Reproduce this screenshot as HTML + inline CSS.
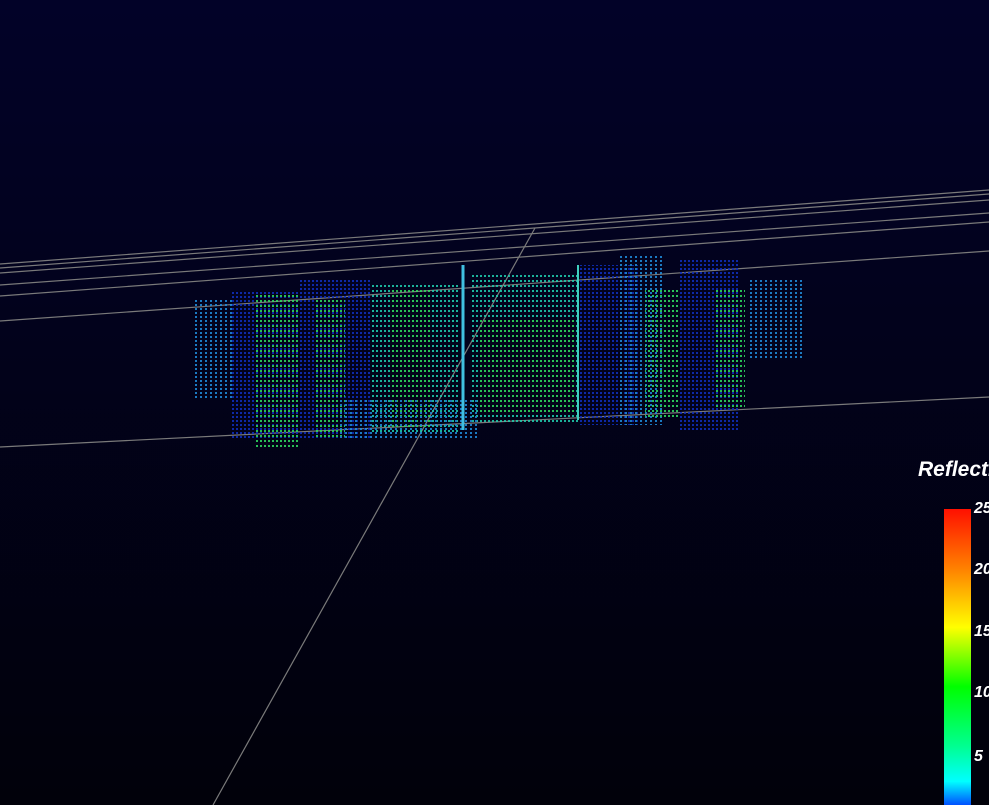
<!DOCTYPE html>
<html><head><style>
html,body{margin:0;padding:0;width:989px;height:805px;overflow:hidden;background:#01011a}
</style></head><body>
<svg width="989" height="805" viewBox="0 0 989 805" xmlns="http://www.w3.org/2000/svg" style="position:absolute;left:0;top:0">
<defs>
<linearGradient id="bg" x1="0" y1="0" x2="0" y2="1">
<stop offset="0" stop-color="#020228"/><stop offset="1" stop-color="#01010a"/>
</linearGradient>
<linearGradient id="cb" x1="0" y1="1" x2="0" y2="0">
<stop offset="0" stop-color="#0050ff"/><stop offset="0.08" stop-color="#00ffff"/>
<stop offset="0.2" stop-color="#00ff90"/><stop offset="0.4" stop-color="#00ff00"/>
<stop offset="0.6" stop-color="#ffff00"/><stop offset="0.8" stop-color="#ff8000"/>
<stop offset="1" stop-color="#ff1000"/>
</linearGradient>
<pattern id="pg" width="4" height="5" patternUnits="userSpaceOnUse"><rect width="2" height="2" fill="#30e060"/></pattern>
<pattern id="pc" width="4" height="5" patternUnits="userSpaceOnUse"><rect width="2" height="2" fill="#20d0b0"/></pattern>
<pattern id="pb" width="4" height="4" patternUnits="userSpaceOnUse"><rect width="2" height="2" fill="#1030c0"/></pattern>
<pattern id="pl" width="5" height="4" patternUnits="userSpaceOnUse"><rect width="2" height="2" fill="#2090e0"/></pattern>
</defs>
<rect width="989" height="805" fill="url(#bg)"/>
<g stroke="#7a7a7a" stroke-width="1.2" fill="none">
<line x1="0" y1="264" x2="989" y2="190"/>
<line x1="0" y1="268" x2="989" y2="194"/>
<line x1="0" y1="273" x2="989" y2="200"/>
<line x1="0" y1="285" x2="989" y2="213"/>
<line x1="0" y1="296" x2="989" y2="222"/>
<line x1="0" y1="321" x2="989" y2="251"/>
<line x1="0" y1="447" x2="989" y2="397"/>
<line x1="213" y1="805" x2="535" y2="228"/>
</g>
<g opacity="0.85">
<rect x="230" y="290" width="70" height="150" fill="url(#pb)"/>
<rect x="255" y="295" width="45" height="155" fill="url(#pg)"/>
<rect x="300" y="280" width="70" height="160" fill="url(#pb)"/>
<rect x="315" y="300" width="30" height="140" fill="url(#pg)"/>
<rect x="370" y="285" width="90" height="150" fill="url(#pc)"/>
<rect x="390" y="290" width="40" height="140" fill="url(#pg)"/>
<rect x="470" y="275" width="110" height="150" fill="url(#pc)"/>
<rect x="480" y="320" width="95" height="95" fill="url(#pg)"/>
<rect x="580" y="265" width="60" height="160" fill="url(#pb)"/>
<rect x="620" y="255" width="45" height="170" fill="url(#pl)"/>
<rect x="645" y="290" width="35" height="130" fill="url(#pg)"/>
<rect x="680" y="260" width="60" height="170" fill="url(#pb)"/>
<rect x="715" y="290" width="30" height="120" fill="url(#pg)"/>
<rect x="195" y="300" width="40" height="100" fill="url(#pl)"/>
<rect x="750" y="280" width="55" height="80" fill="url(#pl)"/>
<rect x="340" y="400" width="140" height="40" fill="url(#pl)"/>
</g>
<line x1="463" y1="265" x2="463" y2="430" stroke="#40c0e0" stroke-width="3"/>
<line x1="578" y1="265" x2="578" y2="420" stroke="#40d0c0" stroke-width="2"/>
<rect x="944" y="509" width="27" height="296" fill="url(#cb)"/>
<g font-family="Liberation Sans, sans-serif" font-style="italic" font-weight="bold" fill="#fff">
<text x="918" y="476" font-size="21">Reflectivity</text>
<text x="974" y="513" font-size="16">25</text>
<text x="974" y="574" font-size="16">20</text>
<text x="974" y="636" font-size="16">15</text>
<text x="974" y="697" font-size="16">10</text>
<text x="974" y="761" font-size="16">5</text>
</g>
</svg>
</body></html>
